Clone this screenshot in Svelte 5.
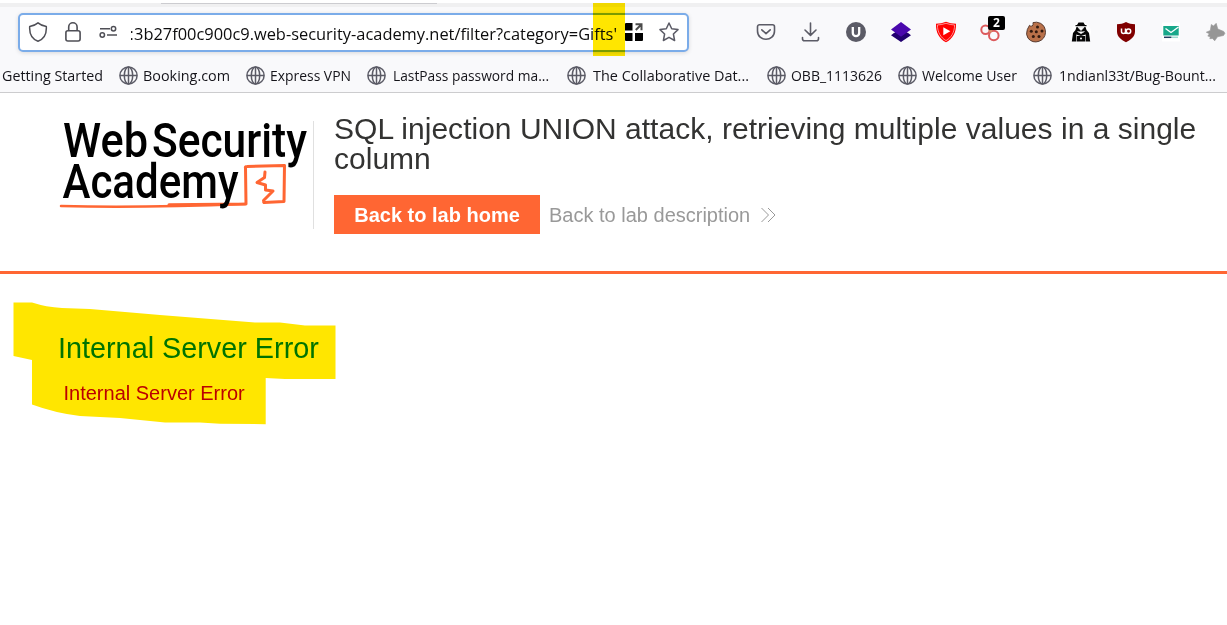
<script>
  const bookmarks = [
    { label: 'Getting Started', width: 101, lead: 0, before: 0 },
    { label: 'Booking.com', width: 87, lead: 5, before: 0 },
    { label: 'Express VPN', width: 81, lead: 5, before: 0 },
    { label: 'LastPass password ma...', width: 156, lead: 7, before: 0 },
    { label: 'The Collaborative Dat...', width: 156, lead: 7, before: 0.9 },
    { label: 'OBB_1113626', width: 91, lead: 5, before: 1.9 },
    { label: 'Welcome User', width: 95, lead: 5, before: 0.2 },
    { label: '1ndianl33t/Bug-Bount...', width: 157, lead: 7, before: -1 }
  ];
  const url = '3b27f00c900c9.web-security-academy.net/filter?category=Gifts\'';
</script>

{#snippet globe()}
  <svg class="globe" width="19" height="19" viewBox="0 0 19 19" fill="none" stroke="#5b5b66" stroke-width="1.5">
    <circle cx="9.5" cy="9.5" r="8.6" />
    <ellipse cx="9.5" cy="9.5" rx="4.2" ry="8.6" />
    <path d="M1 9.5h17M9.5 1v17" />
  </svg>
{/snippet}

<div class="browser">
  <div class="tabs"><div class="tab-edge"></div></div>
  <div class="toolbar">
    <div class="urlbar">
      <svg class="i-shield" width="20" height="20" viewBox="0 0 20 20" fill="none" stroke="#4f4f56" stroke-width="1.5" stroke-linejoin="round">
        <path d="M10 .9C7.8 2.8 5 4 1.7 4.5C1.3 10.500 3.500 16.800 10 19.200C16.500 16.800 18.700 10.500 18.300 4.500C15 4 12.200 2.800 10 .9Z" />
      </svg>
      <svg class="i-lock" width="16" height="20" viewBox="0 0 16 20" fill="none" stroke="#4f4f56" stroke-width="1.600">
        <rect x=".9" y="8.800" width="14.200" height="10.200" rx="2" />
        <path d="M3.700 8.800V5a4.200 4.200 0 0 1 8.400 0v3.800" />
      </svg>
      <svg class="i-perm" width="19" height="14" viewBox="0 0 19 14" fill="none" stroke="#4f4f56" stroke-width="1.500">
        <path d="M1 3.800h10M8 10h10" />
        <circle cx="14.500" cy="3.800" r="2.200" /><circle cx="3.300" cy="10" r="2.200" />
      </svg>
      <svg class="url" width="490" height="30" viewBox="0 0 490 30">
        <text x="-1.500" y="25" font-size="16">:</text>
        <text x="3" y="25" font-size="16" textLength="483" lengthAdjust="spacingAndGlyphs">{url}</text>
      </svg>
      <svg class="i-grid" width="18" height="18" viewBox="0 0 18 18">
        <path fill="#000" d="M1 0h6.500v7.500H0V1a1 1 0 0 1 1-1zM0 10h7.500v8H1a1 1 0 0 1-1-1zM10 10h8v7a1 1 0 0 1-1 1h-7z" />
        <path fill="none" stroke="#4c4c4c" stroke-width="2" d="M10.500 1.300h6v6M16.300 1.500l-5.500 5.500" />
      </svg>
      <svg class="i-star" width="20" height="20" viewBox="0 0 20 20" fill="none" stroke="#5b5b66" stroke-width="1.500" stroke-linejoin="round">
        <path d="M10 1l2.700 5.800 6.300.8-4.600 4.400 1.200 6.500L10 15.300l-5.600 3.200L5.600 12 1 7.600l6.300-.8z" />
      </svg>
    </div>
    <div class="extensions">
      <svg viewBox="0 0 24 24" fill="none" stroke="#5b5b66" stroke-width="1.600" stroke-linecap="round" stroke-linejoin="round">
        <path d="M5.500 4.800h13a2 2 0 0 1 2 2v4.200c0 11-17 11-17 0V6.800a2 2 0 0 1 2-2z" /><path d="M7.800 9.800l4.200 3.900 4.200-3.900" />
      </svg>
      <svg viewBox="0 0 24 24" fill="none" stroke="#5b5b66" stroke-width="1.600" stroke-linecap="round" stroke-linejoin="round">
        <path d="M11.500 3v12M6 10l5.500 5.300L17 10M3.500 17.500v1.300a2 2 0 0 0 2 2h12a2 2 0 0 0 2-2v-1.300" />
      </svg>
      <svg viewBox="0 0 24 24">
        <circle cx="12" cy="12" r="10" fill="#5b5b66" /><path d="M8.800 7v6a3.200 3.200 0 0 0 6.400 0V7" fill="none" stroke="#fff" stroke-width="2.300" />
      </svg>
      <svg viewBox="0 0 24 24">
        <path d="M2 15.200L5 13l7 5 7-5 3 2.200L12 22z" fill="#220070" /><path d="M4.500 13.500L12 8l7.500 5.500L12 18.800z" fill="#220070" /><path d="M2 9.500L12 2l10 7.500-10 7.300z" fill="#4a08ad" />
      </svg>
      <svg viewBox="0 0 24 24">
        <path d="M12 1.700c3 1.300 6.300 1.800 10 2C22.400 12.500 18.500 19 12 22.200 5.500 19 1.600 12.500 2 3.700c3.700-.2 7-.7 10-2z" fill="#f00" />
        <path d="M12 3.300c2.700 1 5.500 1.500 8.600 1.700-.1 7.200-3.300 12.700-8.600 15.600C6.700 17.700 3.500 12.200 3.400 5 6.500 4.800 9.300 4.300 12 3.300z" fill="none" stroke="#ffb3b3" stroke-width=".8" />
        <path d="M9.300 7.200l7 4-7 4z" fill="#fff" />
      </svg>
      <div class="badged">
        <svg viewBox="0 0 24 24" fill="none" stroke="#dc5a5c" stroke-width="2">
          <circle cx="6.500" cy="9.700" r="4.200" /><circle cx="14.800" cy="15.500" r="4.800" /><path d="M10 11.800l3-1.500" stroke="#d78a65" stroke-width="2.500" />
        </svg>
        <span class="badge">2</span>
      </div>
      <svg viewBox="0 0 24 24">
        <path d="M9 2.600q.5 2.200-.8 3.400-1.500.8-2.700-.7L3.300 9.500Q1.500 14.500 4 18.200 8.500 23.500 15 21.300 21 19 21.500 12.500 21.500 6 16.500 3.300 12.500 1.400 9 2.600z" fill="#b9714a" stroke="#4d3228" stroke-width=".9" />
        <g fill="#30190f"><circle cx="13.500" cy="7" r="1.500" /><circle cx="7.300" cy="11.300" r="1.500" /><circle cx="12.300" cy="11.800" r="1.500" /><circle cx="18" cy="11" r="1.500" /><circle cx="9.300" cy="16.500" r="1.500" /><circle cx="15" cy="16.500" r="1.500" /></g>
      </svg>
      <svg viewBox="0 0 24 24">
        <circle cx="12" cy="12" r="10" fill="#fff" />
        <path d="M9.500 2.500h5L16 5h1.500v1.300H6.500V5H8zM7.500 7h9l1 3 2.500 3 1.200 8.500h-4.500v-7L12 16l-4.700-1.500v7H2.800L4 13l2.500-3z" fill="#050505" />
        <path d="M7.800 16h8.400v5.500H7.800z" fill="#050505" />
        <path d="M9 7.300L12 10.500l3-3.200zM8.500 11.500l3.500 2 3.500-2" fill="#fff" stroke="#fff" stroke-width=".8" />
        <circle cx="12" cy="18.500" r="1" fill="#fff" />
      </svg>
      <svg viewBox="0 0 24 24">
        <path d="M12 2c2.800 1.500 5.600 2.100 9 2.300v7.300c0 5-4 8.400-9 10.600-5-2.200-9-5.600-9-10.600V4.300C6.400 4.100 9.200 3.500 12 2z" fill="#800000" />
        <path d="M7.500 8.500v3a2 2 0 0 0 4 0v-3M11.500 11.500a2 2 0 0 0 2 2" fill="none" stroke="#fff" stroke-width="1.500" /><circle cx="14.500" cy="11.300" r="2.200" fill="none" stroke="#fff" stroke-width="1.500" />
      </svg>
      <svg viewBox="0 0 24 24">
        <path d="M3 2.500h18v19H3z" fill="#fff" />
        <path d="M4.300 6h15.400v9.500H4.300z" fill="#18a88a" /><path d="M6.500 8.500l5.500 4 7.500-5.500" fill="none" stroke="#fff" stroke-width="1.400" />
        <path d="M5 17.300h7.500" stroke="#203e60" stroke-width="1.500" /><path d="M13 17.300h6" stroke="#9adbcf" stroke-width="1.500" />
      </svg>
      <svg viewBox="0 0 24 24">
        <path d="M7.300 4.500L9.500 6l2.700-2.700L13.800 9l5.900 2.400 1.200 1.900-1.400 2.200-6 1.300-2.800 4L8.500 18.500l-2.700.2.500-2-2.500-.6 1.500-2.300-3-1.600 4-1.700z" fill="#969696" stroke="#969696" stroke-width=".6" stroke-linejoin="round" />
      </svg>
    </div>
  </div>
  <div class="bookmarks">
    {#each bookmarks as b}
      <div class="bookmark" style:gap="{b.lead}px" style:margin-left="{b.before}px">
        {#if b.lead}{@render globe()}{/if}
        <svg width={b.width} height="24"><text x="0" y="17" font-size="15" textLength={b.width} lengthAdjust="spacingAndGlyphs">{b.label}</text></svg>
      </div>
    {/each}
  </div>
  <div class="url-mark"></div>
</div>

<header>
  <svg class="logo" width="255" height="100" viewBox="0 0 255 100">
    <g fill="none" stroke="#ff6633" stroke-linecap="round" stroke-linejoin="round">
      <path d="M2 90Q80 92 186 88" stroke-width="2.500" />
      <path d="M110 88.800L187 88L186.500 52Q186 50.500 188 50.500L225.500 49.500L225 85.500L205 86.500" stroke-width="3" />
      <path d="M206 56L205.500 61.500L198 66.500L206.500 69L206.500 74L214 75L204.500 84.500L205 86.500" stroke-width="3" />
    </g>
    <g font-size="47.500" fill="#000">
      <text x="4" y="40.500" textLength="85" lengthAdjust="spacingAndGlyphs">Web</text>
      <text x="93" y="40.500" textLength="155" lengthAdjust="spacingAndGlyphs">Security</text>
      <text x="3.500" y="82" textLength="176" lengthAdjust="spacingAndGlyphs">Academy</text>
    </g>
  </svg>
  <div class="title">
    <h2>SQL injection UNION attack, retrieving multiple values in a single column</h2>
    <div class="actions">
      <a class="button">Back to lab home</a>
      <a class="link"><span>Back to lab description</span>
        <svg width="15" height="16" viewBox="0 0 15 16" fill="none" stroke="#999" stroke-width="1"><path d="M.5 1l7 7-7 7M7 1l7 7-7 7" /></svg>
      </a>
    </div>
  </div>
</header>

<main>
  <h1>Internal Server Error</h1>
  <p>Internal Server Error</p>
  <svg class="marker" width="330" height="130" viewBox="0 0 330 130">
    <path fill="#ffe600" d="M3.500 2.500H22Q36 7 52 8L80 9L150 15L245 22.500H270L295 25.500H325.500V79H275L255.700 78V124.200L210 123.700L190 122.500H155L110 118L70 116Q45 113 22 104.500V60L3.500 56Z" />
  </svg>
</main>

<style>
  :global(body) { margin: 0; background: #fff; overflow: hidden; }
  svg { display: block; flex: none; }
  .browser { position: relative; height: 92px; border-bottom: 1px solid #ccccce; background: #f9f9fb; font-family: "Open Sans", "Noto Sans", sans-serif; }
  .tabs { box-sizing: border-box; height: 7px; border-top: 3px solid #fff; background: #f0f0f1; }
  .tab-edge { width: 276px; height: 1px; margin-left: 161px; background: #ccccd0; }
  .toolbar { display: flex; height: 51px; align-items: flex-start; }
  .urlbar { box-sizing: border-box; display: flex; align-items: flex-start; flex: none; width: 671px; height: 39px; margin: 6px 0 0 18px; padding-left: 8px; border: 2px solid #7bace9; border-radius: 5px; background: #fff; box-shadow: 0 1px 4px #0002; }
  .i-shield { margin-top: 7px; }
  .i-lock { margin: 7px 0 0 17px; }
  .i-perm { margin: 10px 0 0 18px; }
  .url { margin-left: 13px; fill: #0c0c0d; }
  .i-grid { margin: 8px 0 0 6px; }
  .i-star { margin: 7px 0 0 16px; }
  .urlbar svg.url { margin-right: -2px; }
  .extensions { display: flex; flex: none; gap: 21px; margin: 13px 0 0 65px; }
  .extensions svg { width: 24px; height: 24px; }
  .badged { position: relative; }
  .badge { position: absolute; left: 9px; top: -4px; width: 17px; height: 14px; border-radius: 2px; background: #000; color: #fff; font: bold 12px/14px "Open Sans", sans-serif; text-align: center; }
  .bookmarks { display: flex; gap: 16.300px; height: 34px; padding: 6px 0 0 1.500px; box-sizing: border-box; fill: #15141a; }
  .bookmark { display: flex; flex: none; }
  .bookmark svg { overflow: visible; }
  .globe { margin-top: 2px; }
  .url-mark { position: absolute; left: 593px; top: 3px; width: 32px; height: 53px; background: #ffe600; mix-blend-mode: multiply; }
  header { display: flex; align-items: flex-start; height: 178px; border-bottom: 3px solid #ff6633; font-family: "Liberation Sans", Arial, sans-serif; }
  .logo { width: 255px; margin: 23px 0 0 59px; font-family: Roboto, sans-serif; font-weight: 500; overflow: visible; }
  .title { flex: 1; margin: 28px 0 0 -1px; padding-left: 20px; border-left: 1px solid #e0e0e0; height: 108px; }
  h2 { margin: -7px 0 0; font-size: 30px; line-height: 30px; font-weight: 400; letter-spacing: .02px; color: #333332; }
  .actions { display: flex; margin-top: 21px; font-size: 20px; line-height: 41px; }
  .button { width: 206px; height: 39px; background: #ff6633; color: #fff; font-weight: 700; text-align: center; }
  .link { display: flex; align-items: center; height: 39px; gap: 11px; margin-left: 9px; color: #999; }
  .link span { padding-top: 2px; }
  main { position: relative; height: 352px; box-sizing: border-box; padding: 56px 0 0 58px; font-family: "Liberation Sans", Arial, sans-serif; }
  h1 { margin: 0; font-size: 28.800px; line-height: 36px; font-weight: 400; color: #008000; }
  p { margin: 15px 0 0 5.500px; font-size: 20px; line-height: 24px; color: #bb0000; }
  .marker { position: absolute; left: 10px; top: 26px; mix-blend-mode: multiply; }
</style>
